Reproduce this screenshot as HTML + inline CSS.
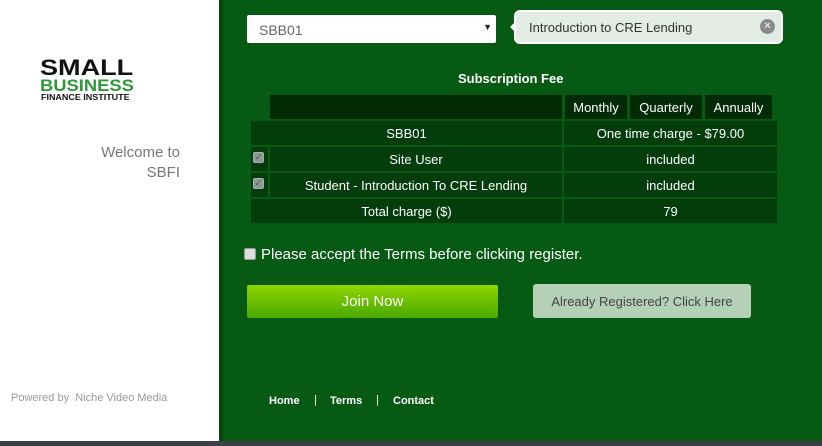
<!DOCTYPE html>
<html><head><meta charset="utf-8"><style>
*{margin:0;padding:0;box-sizing:border-box}
body{width:822px;height:446px;overflow:hidden;position:relative;background:#075a14;font-family:"Liberation Sans",sans-serif}
.abs{position:absolute}
#left{left:0;top:0;width:219px;height:441px;background:#fff}
#edge{left:219px;top:0;width:4px;height:441px;background:#04460d}
.cell{position:absolute;color:#fff;font-size:13px;display:flex;align-items:center;justify-content:center;background:#033d0b}
.hd{background:#012a05}
.cb{position:absolute;width:11px;height:11px;background:#8a9a8c;border:1px solid #aab;border-radius:2px;color:#556;font-size:9px;line-height:9px;text-align:center}
#task{left:0;top:441px;width:822px;height:5px;background:#3a3f48}
.lg{transform-origin:left top;white-space:nowrap}
</style></head><body>
<div id="left" class="abs">
  <div class="abs lg" style="left:40px;top:58px;font-weight:900;font-size:22px;color:#111;line-height:20px;transform:scaleX(1.23)">SMALL</div>
  <div class="abs lg" style="left:40px;top:78px;font-weight:900;font-size:17px;color:#2f9a3a;line-height:16px;transform:scaleX(1.08)">BUSINESS</div>
  <div class="abs lg" style="left:41px;top:94px;font-weight:700;font-size:8px;color:#111;line-height:8px;transform:scaleX(1.12)">FINANCE INSTITUTE</div>
  <div class="abs" style="right:39px;top:143px;font-size:15px;color:#777;text-align:right;line-height:20px">Welcome to<br>SBFI</div>
  <div class="abs" style="left:11px;top:392px;font-size:11px;color:#999">Powered by &nbsp;Niche Video Media</div>
</div>
<div id="edge" class="abs"></div>

<div class="abs" style="left:247px;top:15px;width:249px;height:28px;background:#fff;border-radius:2px;font-size:14px;color:#666;padding:7px 0 0 12px">SBB01<span style="position:absolute;right:4px;top:7px;font-size:9px;color:#222">▼</span></div>
<div class="abs" style="left:510px;top:22px;width:0;height:0;border-top:5px solid transparent;border-bottom:5px solid transparent;border-right:5px solid #fff"></div>
<div class="abs" style="left:514px;top:10px;width:269px;height:34px;background:#e3ece3;border:2px solid #fff;border-radius:6px;font-size:13px;color:#333;padding:8px 0 0 13px">Introduction to CRE Lending<span style="position:absolute;right:6px;top:7px;width:15px;height:15px;border-radius:50%;background:#8a8a8a;color:#e3ece3;font-size:11px;line-height:15px;text-align:center;font-weight:bold">×</span></div>

<div class="abs" style="left:458px;top:71px;font-size:13px;font-weight:bold;color:#fff">Subscription Fee</div>

<div class="cell hd" style="left:270px;top:95px;width:292px;height:24px"></div>
<div class="cell hd" style="left:565px;top:95px;width:62px;height:24px">Monthly</div>
<div class="cell hd" style="left:630px;top:95px;width:72px;height:24px">Quarterly</div>
<div class="cell hd" style="left:705px;top:95px;width:67px;height:24px">Annually</div>

<div class="cell" style="left:251px;top:121px;width:311px;height:24px">SBB01</div>
<div class="cell" style="left:564px;top:121px;width:213px;height:24px">One time charge - $79.00</div>

<div class="cell" style="left:251px;top:147px;width:17px;height:24px"></div>
<div class="cb" style="left:253px;top:152px">✓</div>
<div class="cell" style="left:270px;top:147px;width:292px;height:24px">Site User</div>
<div class="cell" style="left:564px;top:147px;width:213px;height:24px">included</div>

<div class="cell" style="left:251px;top:173px;width:17px;height:24px"></div>
<div class="cb" style="left:253px;top:178px">✓</div>
<div class="cell" style="left:270px;top:173px;width:292px;height:24px">Student - Introduction To CRE Lending</div>
<div class="cell" style="left:564px;top:173px;width:213px;height:24px">included</div>

<div class="cell" style="left:251px;top:199px;width:311px;height:24px">Total charge ($)</div>
<div class="cell" style="left:564px;top:199px;width:213px;height:24px">79</div>

<div class="abs" style="left:244px;top:248px;width:12px;height:12px;background:#ddd;border:1px solid #999;border-radius:2px"></div>
<div class="abs" style="left:261px;top:246px;font-size:15px;color:#fff">Please accept the Terms before clicking register.</div>

<div class="abs" style="left:247px;top:285px;width:251px;height:33px;border-radius:2px;background:linear-gradient(#8fd600,#4aa800);color:#fff;font-size:15px;display:flex;align-items:center;justify-content:center">Join Now</div>
<div class="abs" style="left:533px;top:284px;width:218px;height:34px;border-radius:3px;background:#b4d0b6;color:#444;font-size:13px;display:flex;align-items:center;justify-content:center">Already Registered? Click Here</div>

<div class="abs" style="left:269px;top:395px;font-size:11px;color:#fff;font-weight:bold">Home</div>
<div class="abs" style="left:314px;top:394px;font-size:11px;color:#fff">|</div>
<div class="abs" style="left:330px;top:395px;font-size:11px;color:#fff;font-weight:bold">Terms</div>
<div class="abs" style="left:376px;top:394px;font-size:11px;color:#fff">|</div>
<div class="abs" style="left:393px;top:395px;font-size:11px;color:#fff;font-weight:bold">Contact</div>

<div id="task" class="abs"></div>
</body></html>
